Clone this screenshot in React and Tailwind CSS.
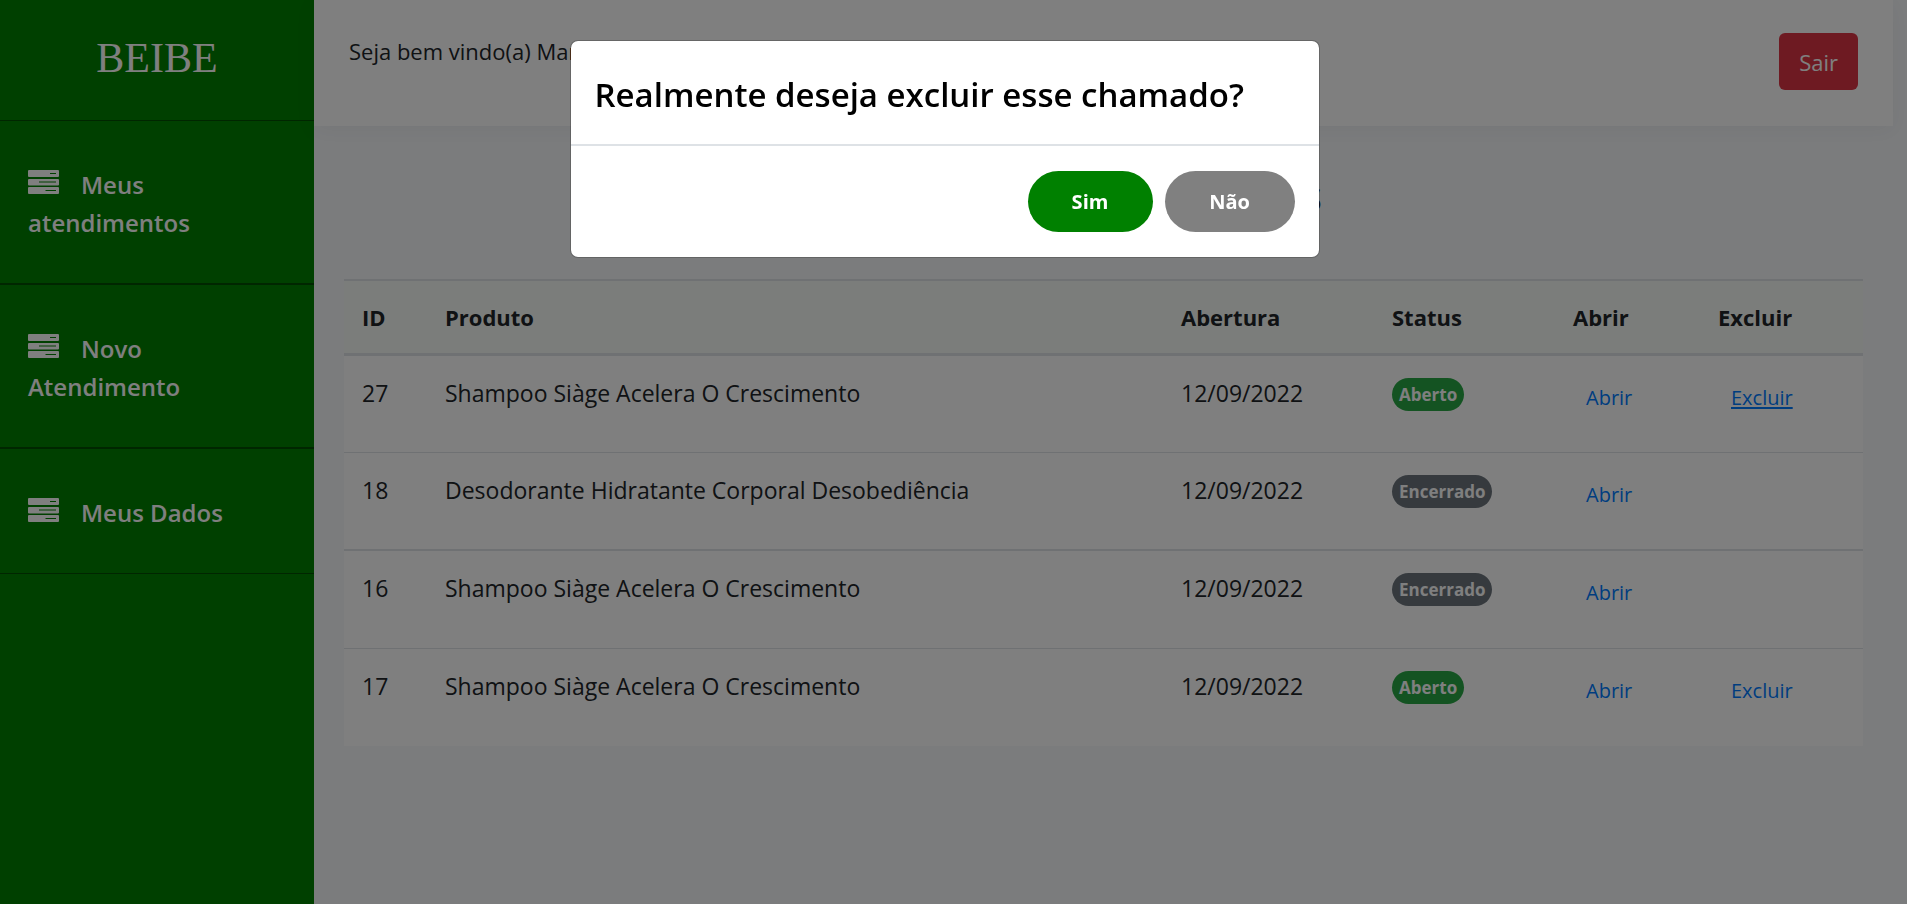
import { useState } from "react";

const chamados = [
  { id: 27, produto: "Shampoo Siàge Acelera O Crescimento", abertura: "12/09/2022", aberto: true, active: true },
  { id: 18, produto: "Desodorante Hidratante Corporal Desobediência", abertura: "12/09/2022", aberto: false },
  { id: 16, produto: "Shampoo Siàge Acelera O Crescimento", abertura: "12/09/2022", aberto: false },
  { id: 17, produto: "Shampoo Siàge Acelera O Crescimento", abertura: "12/09/2022", aberto: true },
];

function ServerIcon() {
  return (
    <svg className="mr-[22px] inline-block align-baseline" width="31" height="24" viewBox="0 0 31 24" fill="currentColor" aria-hidden="true">
      <path fillRule="evenodd" d="M1 0h29a1 1 0 0 1 1 1v5a1 1 0 0 1-1 1H1a1 1 0 0 1-1-1V1a1 1 0 0 1 1-1zM22 3v1h6V3z" />
      <path fillRule="evenodd" d="M1 9h29a1 1 0 0 1 1 1v4.500a1 1 0 0 1-1 1H1a1 1 0 0 1-1-1V10a1 1 0 0 1 1-1zM11 11.500v1h17v-1z" />
      <path fillRule="evenodd" d="M1 17h29a1 1 0 0 1 1 1v5a1 1 0 0 1-1 1H1a1 1 0 0 1-1-1v-5a1 1 0 0 1 1-1zM17.500 20v1H28v-1z" />
    </svg>
  );
}

function NavItem({ children }) {
  return (
    <li className="border-b-2 border-[#004d00] last:border-b">
      <a href="#" className="block pb-[41px] pl-7 pr-12 pt-[45px] text-2xl font-semibold leading-[38px] text-white">
        <ServerIcon />
        {children}
      </a>
    </li>
  );
}

export default function App() {
  const [open, setOpen] = useState(true);
  return (
    <div className="flex min-h-screen bg-[#f7f9fb] font-['Open_Sans','Noto_Sans',sans-serif] text-[22px] leading-9 text-[#212529]">
      <aside className="w-[314px] shrink-0 bg-[#008000]">
        <div className="flex h-[121px] items-center justify-center border-b border-[#004d00] pb-1 font-['Liberation_Serif',serif] text-[42px] text-white">
          BEIBE
        </div>
        <nav>
          <ul>
            <NavItem>Meus atendimentos</NavItem>
            <NavItem>Novo Atendimento</NavItem>
            <NavItem>Meus Dados</NavItem>
          </ul>
        </nav>
      </aside>

      <div className="min-w-0 flex-1 pr-[14px]">
        <header className="flex h-[126px] items-start justify-between bg-white pl-[35px] pr-[35px] pt-[33px] shadow-[0_4px_20px_rgba(58,59,69,0.06)]">
          <p>Seja bem vindo(a) Maria</p>
          <button type="button" className="h-[57px] rounded-md bg-[#dc3545] px-5 text-white">
            Sair
          </button>
        </header>

        <main className="px-[30px] pt-[51px]">
          <h1 className="mb-[66px] pr-1 text-center text-[41px] font-semibold leading-9">Lista de atendimentos</h1>
          <table className="w-full table-fixed border-collapse bg-white text-left">
            <thead className="bg-[#f7faf7]">
              <tr className="border-b-[3px] border-t-2 border-[#dee2e6] font-bold">
                <th className="h-[74px] w-[83px] pl-[18px]">ID</th>
                <th className="pl-[18px]">Produto</th>
                <th className="w-[211px] pl-[18px]">Abertura</th>
                <th className="w-[181px] pl-[18px]">Status</th>
                <th className="w-[145px] pl-[18px]">Abrir</th>
                <th className="w-[163px] pl-[18px]">Excluir</th>
              </tr>
            </thead>
            <tbody className="text-[23px]">
              {chamados.map((c) => (
                <tr key={c.id} className="border-t border-[#dee2e6] align-top odd:border-t-2">
                  <td className="h-[98px] pl-[18px] pt-[19px]">{c.id}</td>
                  <td className="pl-[18px] pt-[19px]">{c.produto}</td>
                  <td className="pl-[18px] pt-[19px]">{c.abertura}</td>
                  <td className="pl-[18px] pt-[22px]">
                    <span
                      className={
                        c.aberto
                          ? "block w-fit rounded-full bg-[#28a745] px-[7px] text-[17px] font-bold leading-[33px] text-white"
                          : "block w-fit rounded-full bg-[#6c757d] px-[7px] text-[17px] font-bold leading-[33px] text-white"
                      }
                    >
                      {c.aberto ? "Aberto" : "Encerrado"}
                    </span>
                  </td>
                  <td className="pl-[31px] pt-6 text-xl leading-9">
                    <a href="#" className="text-[#007bff]">Abrir</a>
                  </td>
                  <td className="pl-[31px] pt-6 text-xl leading-9">
                    {c.aberto && (
                      <button
                        type="button"
                        onClick={() => setOpen(true)}
                        className={c.active ? "text-[#007bff] underline decoration-2 underline-offset-2" : "text-[#007bff]"}
                      >
                        Excluir
                      </button>
                    )}
                  </td>
                </tr>
              ))}
            </tbody>
          </table>
        </main>
      </div>

      {open && (
        <div className="fixed inset-0 flex items-start justify-center bg-black/50 pr-[18px] pt-10">
          <div role="dialog" aria-modal="true" aria-labelledby="dialog-title" className="w-[750px] rounded-lg border border-black/20 bg-white bg-clip-padding text-black">
            <div className="border-b-2 border-[#dee2e6] px-6 pb-[22px] pt-[26px]">
              <h2 id="dialog-title" className="text-[33px] font-semibold leading-[55px]">Realmente deseja excluir esse chamado?</h2>
            </div>
            <div className="flex justify-end gap-3 px-6 py-[25px] text-xl font-bold text-white">
              <button type="button" onClick={() => setOpen(false)} className="h-[61px] w-[125px] rounded-full bg-[#008000]">
                Sim
              </button>
              <button type="button" onClick={() => setOpen(false)} className="h-[61px] w-[130px] rounded-full bg-[#808080]">
                Não
              </button>
            </div>
          </div>
        </div>
      )}
    </div>
  );
}
